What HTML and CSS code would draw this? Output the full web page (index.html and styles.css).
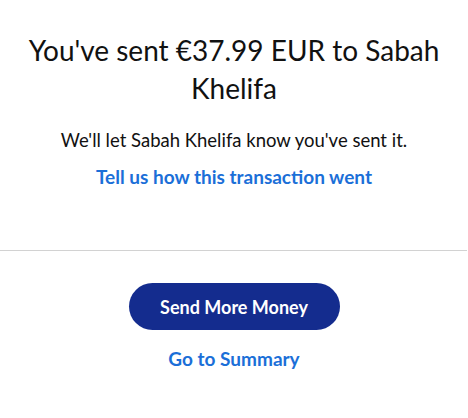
FILE: index.html
```html
<!DOCTYPE html>
<html>
<head>
<meta charset="utf-8">
<link rel="stylesheet" href="styles.css">
</head>
<body>
<main class="page">
  <section class="top">
    <h1 class="title">You've sent €37.99 EUR to Sabah Khelifa</h1>
    <p class="note">We'll let Sabah Khelifa know you've sent it.</p>
    <a class="link feedback" href="#">Tell us how this transaction went</a>
  </section>
  <hr class="divider">
  <section class="actions">
    <button class="btn">Send More Money</button>
    <a class="link summary" href="#">Go to Summary</a>
  </section>
</main>
</body>
</html>
```
FILE: styles.css
```css
* { box-sizing: border-box; }
html, body { margin: 0; padding: 0; background: #fff; }
body { font-family: "Lato", "Open Sans", sans-serif; color: #111; }
.page { width: 468px; display: flex; flex-direction: column; }
.top { display: flex; flex-direction: column; align-items: center; padding: 31px 20px 0; }
.title { margin: 0; font-size: 28px; font-weight: 400; line-height: 38px; text-align: center; color: #111; }
.note { margin: 21px 0 0; font-size: 18.5px; line-height: 24px; }
.link { color: #1b6fd8; font-weight: 700; text-decoration: none; font-size: 19px; line-height: 24px; }
.feedback { margin-top: 13px; }
.divider { margin: 61px 1px 0 0; border: 0; border-top: 1px solid #d2d2d2; height: 0; }
.actions { display: flex; flex-direction: column; align-items: center; padding-top: 32px; }
.btn { width: 211px; height: 47px; border: 0; border-radius: 24px; background: #142c8e; color: #fff; font-family: inherit; font-size: 18px; font-weight: 700; }
.summary { margin-top: 17px; }
```
